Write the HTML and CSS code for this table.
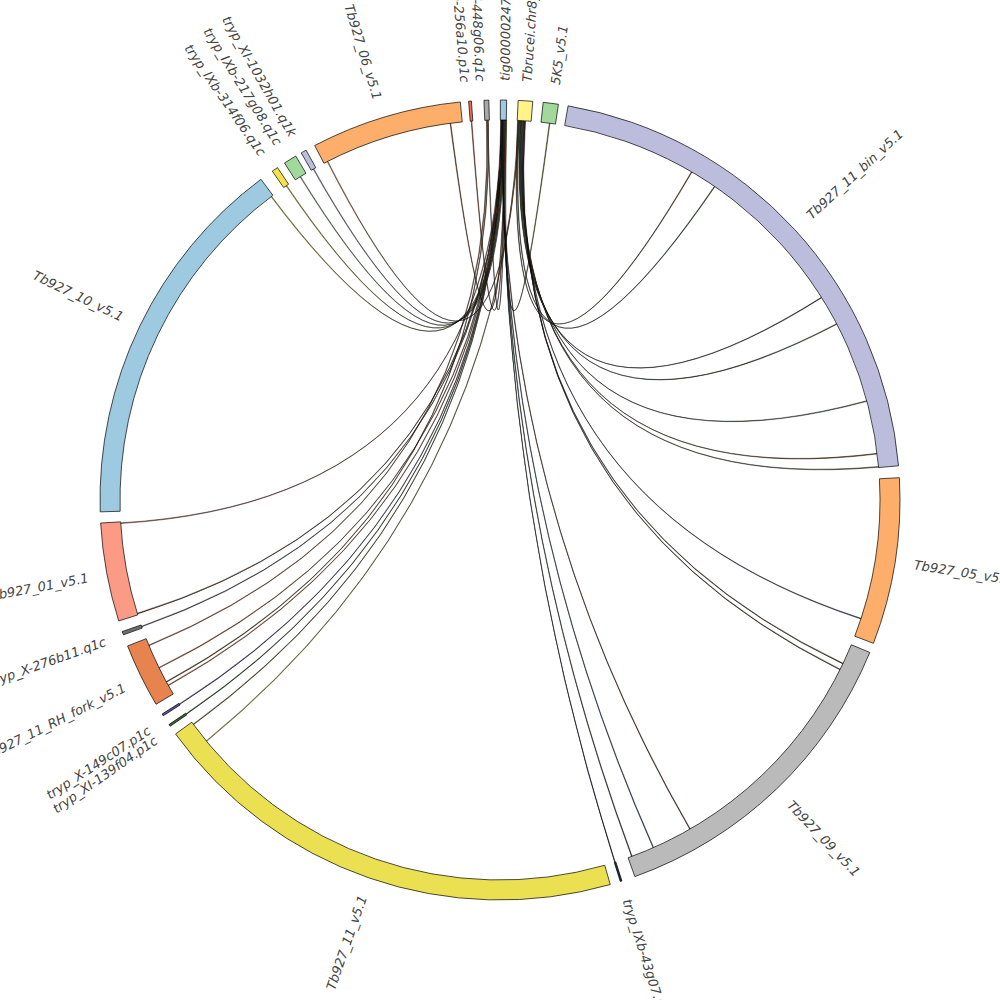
FILE: index.html
```html
<!DOCTYPE html>
<html lang="en">
<head>
<meta charset="utf-8">
<title>Circos plot</title>
<link rel="stylesheet" href="styles.css">
</head>
<body>
<div class="canvas">
  <svg id="circos" class="circos" width="1000" height="1000" viewBox="0 0 1000 1000" xmlns="http://www.w3.org/2000/svg">
    <g id="chords" class="chords"></g>
    <g id="segments" class="segments"></g>
    <g id="labels" class="labels"></g>
  </svg>
</div>
<script src="script.js"></script>
</body>
</html>
```
FILE: styles.css
```css
html, body {
  margin: 0;
  padding: 0;
  background: #ffffff;
}
.canvas {
  width: 1000px;
  height: 1000px;
  overflow: hidden;
}
.circos {
  display: block;
}
.seg {
  stroke: #000000;
  stroke-width: 0.7;
  stroke-linejoin: miter;
}
.chord {
  stroke: #000000;
  stroke-width: 0.45;
  stroke-linejoin: round;
}
.label {
  font-family: "DejaVu Sans", "Liberation Sans", sans-serif;
  font-size: 13px;
  font-style: italic;
  fill: #444444;
}
```
FILE: script.js
```js
(function () {
  var NS = 'http://www.w3.org/2000/svg';
  var cx = 500, cy = 500, R0 = 380, R1 = 400, LR = 419;
  function pt(a, r) {
    var t = a * Math.PI / 180;
    return [cx + r * Math.sin(t), cy - r * Math.cos(t)];
  }
  function f(p) { return p[0].toFixed(2) + ',' + p[1].toFixed(2); }
  function el(tag, attrs, parent) {
    var e = document.createElementNS(NS, tag);
    for (var k in attrs) e.setAttribute(k, attrs[k]);
    parent.appendChild(e);
    return e;
  }
  var segs = [
    [0.05, 0.95, '#9ecae1'],
    [2.6, 4.7, '#fff38a'],
    [6.2, 8.4, '#a1d99b'],
    [9.8, 85.1, '#bcbddc'],
    [86.8, 111.0, '#fdae6b'],
    [112.4, 160.3, '#bababa'],
    [162.25, 162.5, '#1f2a44'],
    [164.0, 234.2, '#ebe052'],
    [235.55, 235.85, '#2f6b2f'],
    [237.35, 237.65, '#5a4f9a'],
    [239.3, 248.6, '#e6834f'],
    [250.3, 250.8, '#707070'],
    [252.4, 266.7, '#fb9a85'],
    [268.3, 323.3, '#9ecae1'],
    [325.3, 326.2, '#f3e24a'],
    [327.4, 329.3, '#a1d99b'],
    [330.2, 331.0, '#bcbddc'],
    [332.4, 354.3, '#fdae6b'],
    [355.5, 355.9, '#f46d43'],
    [357.7, 358.4, '#a8a8a8']
  ];
  var chords = [
    [0.15, 266.5, '#fb9a85'],
    [0.25, 252.6, '#6b3a1e'],
    [0.3, 250.55, '#707070'],
    [358.0, 247.5, '#e6834f'],
    [0.35, 243.8, '#e6834f'],
    [358.2, 241.4, '#8a6b3a'],
    [0.4, 240.8, '#e6834f'],
    [0.45, 237.5, '#5a4f9a'],
    [0.5, 235.7, '#2f6b2f'],
    [0.55, 233.8, '#8a7b30'],
    [3.0, 230.6, '#ebe052'],
    [0.6, 323.0, '#f3e24a'],
    [0.65, 325.8, '#f3e24a'],
    [0.7, 328.3, '#a1d99b'],
    [0.75, 330.6, '#bcbddc'],
    [2.8, 333.0, '#fdae6b'],
    [0.8, 352.5, '#b0683a'],
    [0.85, 355.7, '#f46d43'],
    [0.9, 358.1, '#a8a8a8'],
    [0.95, 7.5, '#a8a83a'],
    [2.7, 30.3, '#8a5a30'],
    [2.9, 34.4, '#5a7a5a'],
    [3.1, 57.8, '#444444'],
    [3.2, 62.4, '#5a7a5a'],
    [3.3, 74.9, '#6a8a6a'],
    [3.4, 83.0, '#b07a4a'],
    [3.5, 85.0, '#9a9a6a'],
    [3.6, 108.2, '#6a6a9a'],
    [3.7, 115.5, '#5a3a2a'],
    [3.8, 116.5, '#5a3a2a'],
    [0.2, 150.0, '#8a4a2a'],
    [0.3, 156.2, '#4a6a9a'],
    [0.35, 159.7, '#3a5a3a'],
    [0.4, 162.4, '#1f2a44']
  ];
  var labels = [
    ['tig00000247', 0.7],
    ['Tbrucei.chr8_v4', 3.7],
    ['5K5_v5.1', 7.6],
    ['Tb927_11_bin_v5.1', 47.45],
    ['Tb927_05_v5.1', 98.9],
    ['Tb927_09_v5.1', 136.3],
    ['tryp_IXb-43g07.p1c', 162.4],
    ['Tb927_11_v5.1', 199.1],
    ['tryp_XI-139f04.p1c', 235.2],
    ['tryp_X-149c07.p1c', 236.8],
    ['Tb927_11_RH_fork_v5.1', 243.5],
    ['tryp_X-276b11.q1c', 250.3],
    ['Tb927_01_v5.1', 259.3],
    ['Tb927_10_v5.1', 295.8],
    ['tryp_IXb-314f06.q1c', 325.5],
    ['tryp_IXb-217g08.q1c', 328.1],
    ['tryp_XI-1032h01.q1k', 330.4],
    ['Tb927_06_v5.1', 343.0],
    ['tryp_IXb-256a10.p1c', 355.2],
    ['tryp_X-448g06.q1c', 357.3]
  ];
  var gC = document.getElementById('chords');
  var gS = document.getElementById('segments');
  var gL = document.getElementById('labels');
  var w = 0.05;
  chords.forEach(function (c) {
    var a = c[0], b = c[1];
    var A1 = pt(a - w, R0), A2 = pt(a + w, R0), B1 = pt(b - w, R0), B2 = pt(b + w, R0);
    var C = cx + ',' + cy;
    var d = 'M' + f(A1) + ' L' + f(A2) + ' Q' + C + ' ' + f(B1) + ' L' + f(B2) + ' Q' + C + ' ' + f(A1) + ' Z';
    el('path', { d: d, fill: c[2], 'class': 'chord' }, gC);
  });
  segs.forEach(function (s) {
    var a = s[0], b = s[1];
    var large = (b - a) > 180 ? 1 : 0;
    var o1 = pt(a, R1), o2 = pt(b, R1), i2 = pt(b, R0), i1 = pt(a, R0);
    var d = 'M' + f(o1) + ' A' + R1 + ',' + R1 + ' 0 ' + large + ' 1 ' + f(o2) +
      ' L' + f(i2) + ' A' + R0 + ',' + R0 + ' 0 ' + large + ' 0 ' + f(i1) + ' Z';
    el('path', { d: d, fill: s[2], 'class': 'seg' }, gS);
  });
  labels.forEach(function (l) {
    var a = l[1];
    var p = pt(a, LR);
    var right = a < 180;
    var rot = right ? a - 90 : a + 90;
    var t = el('text', {
      x: p[0].toFixed(2), y: p[1].toFixed(2),
      'class': 'label',
      'text-anchor': right ? 'start' : 'end',
      'dominant-baseline': 'central',
      transform: 'rotate(' + rot.toFixed(2) + ' ' + p[0].toFixed(2) + ' ' + p[1].toFixed(2) + ')'
    }, gL);
    t.textContent = l[0];
  });
})();
```
